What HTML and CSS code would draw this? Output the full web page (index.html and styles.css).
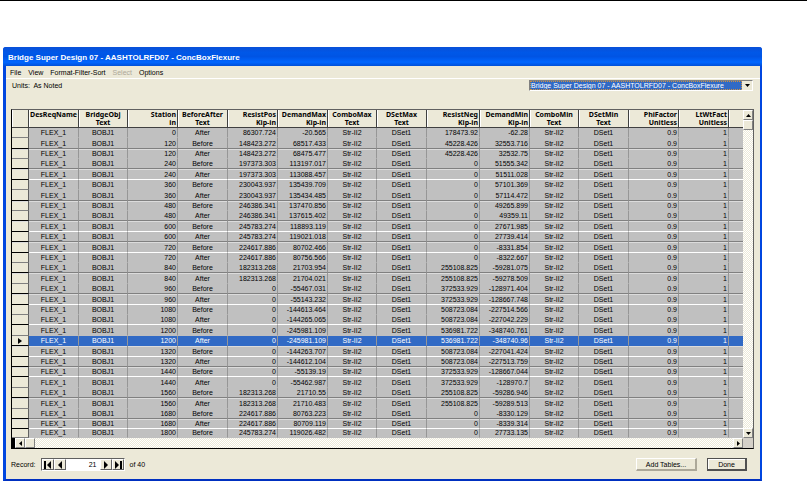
FILE: index.html
```html
<!DOCTYPE html>
<html lang="en">
<head>
    <meta charset="UTF-8">
    <meta name="viewport" content="width=device-width, initial-scale=1.0">
    <title>Bridge Super Design 07 - AASHTOLRFD07 - ConcBoxFlexure</title>
    <link rel="stylesheet" href="styles.css">
</head>
<body>
    <hr class="page-rule">
    <main class="window">
        <h1 class="title-bar">Bridge Super Design 07 - AASHTOLRFD07 - ConcBoxFlexure</h1>
        <nav class="menu-bar">
            <button type="button">File</button>
            <button type="button">View</button>
            <button type="button">Format-Filter-Sort</button>
            <button type="button" disabled>Select</button>
            <button type="button">Options</button>
        </nav>
        <div class="toolbar">
            <span class="units">Units:&nbsp; As Noted</span>
            <div class="combo">
                <select aria-label="Table">
                    <option>Bridge Super Design 07 - AASHTOLRFD07 - ConcBoxFlexure</option>
                </select>
                <span class="combo-arrow"><svg width="5" height="3" viewBox="0 0 5 3"><path d="M0 0h5L2.5 3z"/></svg></span>
            </div>
        </div>
        <div class="grid-frame">
            <table>
                <colgroup>
                    <col class="col-mark">
                    <col class="col-mid"><col class="col-narrow"><col class="col-mid"><col class="col-mid">
                    <col class="col-mid"><col class="col-mid"><col class="col-narrow"><col class="col-mid">
                    <col class="col-wide">
                    <col class="col-mid"><col class="col-narrow"><col class="col-mid"><col class="col-mid"><col class="col-mid">
                    <col>
                </colgroup>
                <thead>
                    <tr>
                        <th></th>
                        <th class="clipped">DesReqName<br>&nbsp;</th>
                        <th>BridgeObj<br>Text</th>
                        <th class="num">Station<br>in</th>
                        <th>BeforeAfter<br>Text</th>
                        <th class="num">ResistPos<br>Kip-in</th>
                        <th class="num">DemandMax<br>Kip-in</th>
                        <th>ComboMax<br>Text</th>
                        <th>DSetMax<br>Text</th>
                        <th class="num">ResistNeg<br>Kip-in</th>
                        <th class="num">DemandMin<br>Kip-in</th>
                        <th>ComboMin<br>Text</th>
                        <th>DSetMin<br>Text</th>
                        <th class="num">PhiFactor<br>Unitless</th>
                        <th class="num">LtWtFact<br>Unitless</th>
                        <th></th>
                    </tr>
                </thead>
                <tbody id="rows"></tbody>
            </table>
            <div class="scroll-v">
                <button type="button" aria-label="Scroll up"><svg width="5" height="3" viewBox="0 0 5 3"><path d="M0 3h5L2.5 0z"/></svg></button>
                <span class="thumb"></span>
                <button type="button" class="far" aria-label="Scroll down"><svg width="5" height="3" viewBox="0 0 5 3"><path d="M0 0h5L2.5 3z"/></svg></button>
            </div>
            <div class="scroll-h">
                <button type="button" aria-label="Scroll left"><svg width="3" height="5" viewBox="0 0 3 5"><path d="M3 0v5L0 2.5z"/></svg></button>
                <span class="thumb"></span>
                <button type="button" class="far" aria-label="Scroll right"><svg width="3" height="5" viewBox="0 0 3 5"><path d="M0 0v5l3-2.5z"/></svg></button>
            </div>
            <div class="corner"></div>
        </div>
        <div class="footer">
            <label for="record">Record:</label>
            <div class="record-nav">
                <button type="button" aria-label="First record"><svg width="8" height="8" viewBox="0 0 8 8"><path d="M0 0h2v8H0zM7 0v8L3 4z"/></svg></button>
                <button type="button" aria-label="Previous record"><svg width="8" height="8" viewBox="0 0 8 8"><path d="M6 0v8L2 4z"/></svg></button>
                <input type="text" id="record" value="21">
                <button type="button" aria-label="Next record"><svg width="8" height="8" viewBox="0 0 8 8"><path d="M2 0v8l4-4z"/></svg></button>
                <button type="button" aria-label="Last record"><svg width="8" height="8" viewBox="0 0 8 8"><path d="M6 0h2v8H6zM1 0v8l4-4z"/></svg></button>
            </div>
            <span>of 40</span>
            <button type="button" class="btn btn-add">Add Tables...</button>
            <button type="button" class="btn btn-done">Done</button>
        </div>
    </main>
    <script src="script.js"></script>
</body>
</html>
```

FILE: styles.css
```css
body {
    margin: 0;
    background: #fff;
    color: #000;
    font-family: 'Liberation Sans', Arial, sans-serif;
    font-size: 7px;
}
button, input, select {
    font: inherit;
    color: inherit;
    margin: 0;
    padding: 0;
    box-sizing: border-box;
}
svg {
    display: block;
}
.page-rule {
    border: 0;
    height: 1px;
    background: #000;
    margin: 0 0 46px;
}
.window {
    margin: 0 45px 0 3px;
    background: #ece9d8;
    border: solid #0046e0;
    border-width: 0 2px 2px 3px;
    border-bottom-color: #0030c0;
    border-radius: 3px 3px 0 0;
}
.title-bar {
    margin: 0 -2px 0 -3px;
    padding: 0 5px;
    height: 19px;
    line-height: 21px;
    font-size: 8px;
    font-weight: 700;
    color: #fff;
    background: linear-gradient(#0a50d8 0%, #0058e8 30%, #0054e4 50%, #0066ff 80%, #0050d8 100%);
    border-radius: 3px 3px 0 0;
}
.menu-bar {
    display: flex;
    gap: 7px;
    padding: 0 4px;
    height: 12px;
    border-bottom: 1px solid #fff;
}
.menu-bar button {
    border: 0;
    background: none;
}
.menu-bar button:disabled {
    color: #aca899;
}
.toolbar {
    display: flex;
    justify-content: space-between;
    align-items: flex-start;
    padding: 1px 7px 17px 6px;
}
.units {
    line-height: 12px;
}
.combo {
    display: flex;
    width: 224px;
    height: 11px;
    box-sizing: border-box;
    border: 1px solid #808080;
    border-right-color: #fff;
    border-bottom-color: #fff;
}
.combo select {
    flex: 1;
    min-width: 0;
    appearance: none;
    border: 1px dotted #d09040;
    border-radius: 0;
    background: #316ac5;
    color: #fff;
    line-height: 7px;
}
.combo-arrow {
    display: grid;
    place-items: center;
    width: 10px;
    background: #ece9d8;
}
.grid-frame {
    display: grid;
    grid-template-columns: 1fr 10px;
    margin: 0 6px 0 5px;
    border: 1px solid #606060;
    border-left-color: #000;
    border-bottom-color: #000;
}
table {
    width: 100%;
    table-layout: fixed;
    border-collapse: separate;
    border-spacing: 0;
    background: #c0c0c0;
}
.col-mark { width: 17px; }
.col-narrow { width: 49px; }
.col-mid { width: 50px; }
.col-wide { width: 53px; }
th, td {
    box-sizing: border-box;
    padding: 0 1px;
    overflow: hidden;
    white-space: nowrap;
    text-align: center;
    border-right: 1px solid #969696;
    border-bottom: 1px solid #c0c0c0;
}
th {
    font-family: 'Noto Sans', sans-serif;
    font-weight: 700;
    line-height: 8px;
    height: 18px;
    background: #ece9d8;
    border-right-color: #404040;
    border-bottom-color: #404040;
    box-shadow: inset 1px 0 #fff;
}
td {
    height: 10px;
    line-height: 9px;
}
/* the grid lines fall every 10 or 11 pixels */
tbody tr:nth-child(5n+2) td,
tbody tr:nth-child(5n) td {
    height: 11px;
}
tbody tr:last-child td {
    height: 9px;
    line-height: 8px;
}
.num {
    text-align: right;
}
.clipped {
    direction: rtl;
}
th:last-child, td:last-child {
    border-right: 0;
}
td:first-child {
    background: #ece9d8;
    border-right-color: #606060;
    border-bottom-color: #808080;
}
.dark td { border-bottom-color: #808080; }
.light td { border-bottom-color: #fff; }
.dark + tr td { box-shadow: inset 0 1px #dcdcdc; }
.dark td:first-child,
.light td:first-child {
    border-bottom-color: #000;
}
.current td:not(:first-child) {
    background: #316ac5;
    border-bottom-color: #316ac5;
    color: #fff;
}
td svg {
    margin: 0 auto;
}
.scroll-v, .scroll-h {
    display: flex;
    background: repeating-conic-gradient(#fff 0 25%, #ece9d8 0 50%) 0 0 / 2px 2px;
}
.scroll-v {
    flex-direction: column;
}
.scroll-h {
    border-left: 3px solid #000;
}
.scroll-v button, .scroll-h button, .thumb {
    display: grid;
    place-items: center;
    box-sizing: border-box;
    width: 10px;
    height: 10px;
    background: #ece9d8;
    border: 1px solid #fff;
    border-right-color: #808080;
    border-bottom-color: #808080;
}
.scroll-v .far { margin-top: auto; }
.scroll-h .far { margin-left: auto; }
.corner {
    background: #d4d0c8;
}
.footer {
    display: flex;
    align-items: center;
    gap: 5px;
    padding: 9px 13px 8px 5px;
    height: 13px;
}
.record-nav {
    display: flex;
    box-sizing: border-box;
    width: 84px;
    height: 13px;
    border: 1px solid #606060;
    border-right-color: #fff;
    border-bottom-color: #fff;
}
.record-nav button {
    display: grid;
    place-items: center;
    width: 12px;
    background: #ece9d8;
    border: 1px solid #fff;
    border-right-color: #606060;
    border-bottom-color: #606060;
}
.record-nav input {
    flex: 1;
    min-width: 0;
    border: 0;
    padding-right: 3px;
    text-align: right;
    background: #fff;
}
.btn {
    height: 13px;
    background: #ece9d8;
    border: 1px solid #fff;
    border-right: 2px solid #aca899;
    border-bottom: 2px solid #aca899;
}
.btn-add {
    width: 61px;
    margin-left: auto;
    margin-right: 5px;
}
.btn-done {
    width: 40px;
    border-color: #505050;
    box-shadow: inset 1px 1px #fff;
}
```

FILE: script.js
```js
// station, resistPos, demandMax, resistNeg, demandMin, grid line below
const records = [
    ['0', '86307.724', '-20.565', '178473.92', '-62.28', ''],
    ['120', '148423.272', '68517.433', '45228.426', '32553.716', 'dark'],
    ['120', '148423.272', '68475.477', '45228.426', '32532.75', ''],
    ['240', '197373.303', '113197.017', '0', '51555.342', 'dark'],
    ['240', '197373.303', '113088.457', '0', '51511.028', 'light'],
    ['360', '230043.937', '135439.709', '0', '57101.369', ''],
    ['360', '230043.937', '135434.485', '0', '57114.472', 'dark'],
    ['480', '246386.341', '137470.856', '0', '49265.899', ''],
    ['480', '246386.341', '137615.402', '0', '49359.11', 'dark'],
    ['600', '245783.274', '118893.119', '0', '27671.985', 'light'],
    ['600', '245783.274', '119021.018', '0', '27739.414', 'dark'],
    ['720', '224617.886', '80702.466', '0', '-8331.854', 'light'],
    ['720', '224617.886', '80756.566', '0', '-8322.667', ''],
    ['840', '182313.268', '21703.954', '255108.825', '-59281.075', 'dark'],
    ['840', '182313.268', '21704.021', '255108.825', '-59278.509', ''],
    ['960', '0', '-55467.031', '372533.929', '-128971.404', 'dark'],
    ['960', '0', '-55143.232', '372533.929', '-128667.748', 'light'],
    ['1080', '0', '-144613.464', '508723.084', '-227514.566', ''],
    ['1080', '0', '-144265.065', '508723.084', '-227042.229', 'light'],
    ['1200', '0', '-245981.109', '536981.722', '-348740.761', ''],
    ['1200', '0', '-245981.109', '536981.722', '-348740.96', 'dark'],
    ['1320', '0', '-144263.707', '508723.084', '-227041.424', 'light'],
    ['1320', '0', '-144612.104', '508723.084', '-227513.759', 'dark'],
    ['1440', '0', '-55139.19', '372533.929', '-128667.044', 'light'],
    ['1440', '0', '-55462.987', '372533.929', '-128970.7', ''],
    ['1560', '182313.268', '21710.55', '255108.825', '-59286.946', 'dark'],
    ['1560', '182313.268', '21710.483', '255108.825', '-59289.513', ''],
    ['1680', '224617.886', '80763.223', '0', '-8330.129', 'dark'],
    ['1680', '224617.886', '80709.119', '0', '-8339.314', 'light'],
    ['1800', '245783.274', '119026.482', '0', '27733.135', '']
];
const current = 20;
const marker = '<svg width="4" height="6" viewBox="0 0 4 6"><path d="M0 0v6l4-3z"/></svg>';

document.getElementById('rows').innerHTML = records.map((r, i) => {
    const side = i % 2 ? 'Before' : 'After';
    return `<tr class="${r[5]}${i === current ? ' current' : ''}">
        <td>${i === current ? marker : ''}</td>
        <td>FLEX_1</td><td>BOBJ1</td>
        <td class="num">${r[0]}</td><td>${side}</td>
        <td class="num">${r[1]}</td><td class="num">${r[2]}</td>
        <td>Str-II2</td><td>DSet1</td>
        <td class="num">${r[3]}</td><td class="num">${r[4]}</td>
        <td>Str-II2</td><td>DSet1</td>
        <td class="num">0.9</td><td class="num">1</td><td></td>
    </tr>`;
}).join('');
```
